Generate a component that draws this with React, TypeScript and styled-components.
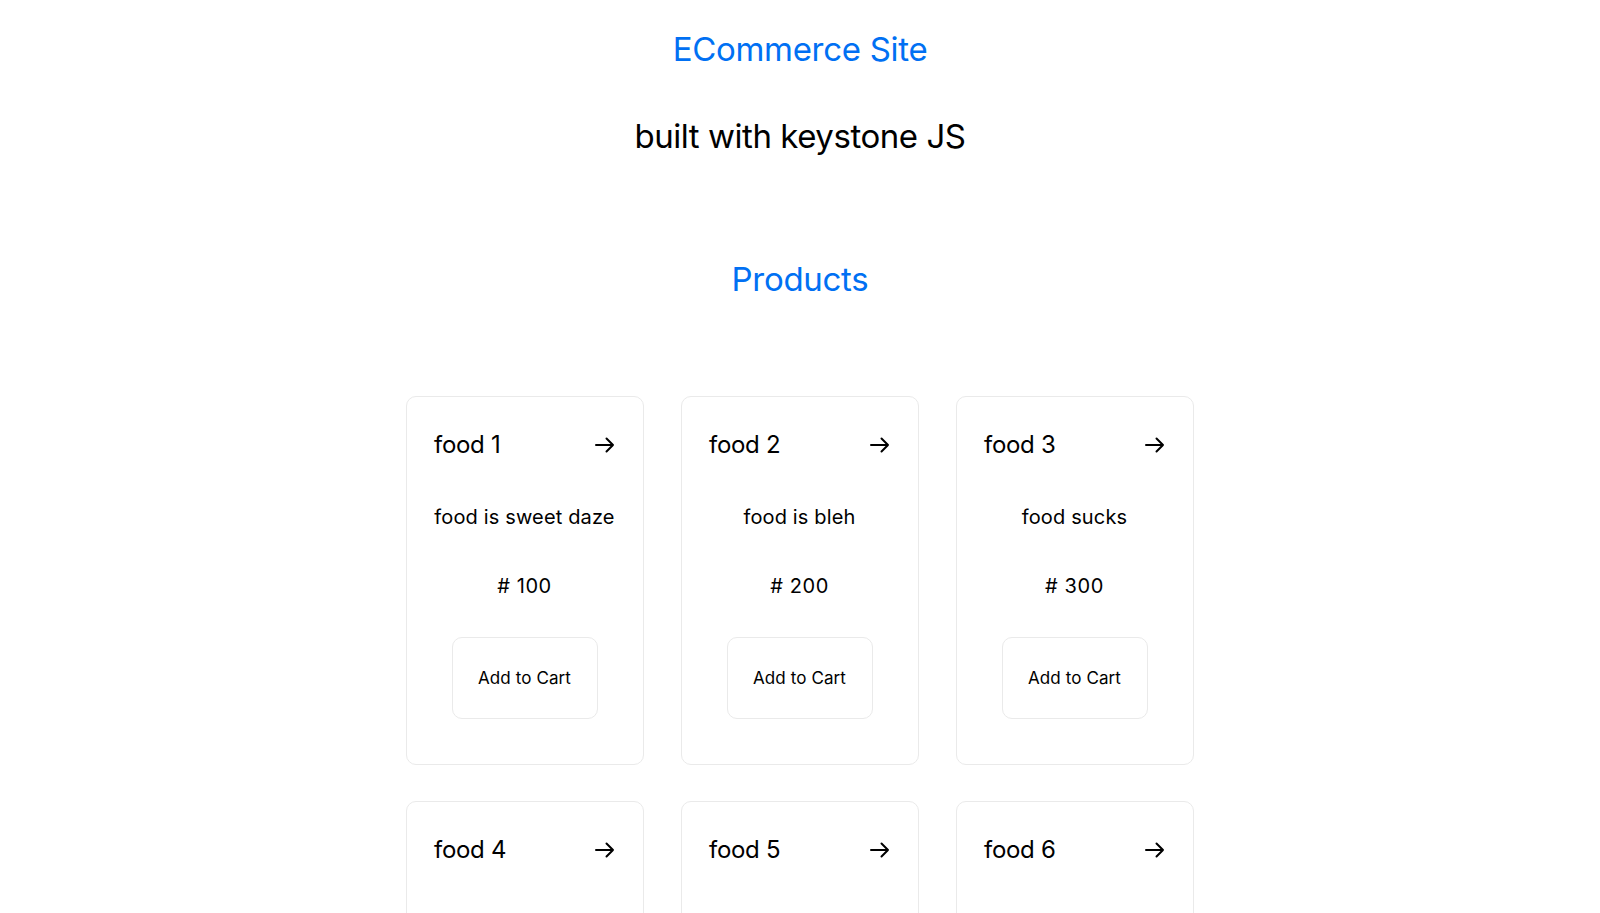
import React, { FC } from "react";
import styled, { createGlobalStyle } from "styled-components";

const GlobalStyle = createGlobalStyle`
  html, body {
    margin: 0;
    padding: 0;
    background: #fff;
    font-family: Inter, "Noto Sans", "Liberation Sans", sans-serif;
    color: #000;
  }
  * {
    box-sizing: border-box;
  }
`;

const Main = styled.main`
  display: flex;
  flex-direction: column;
  align-items: center;
  padding-top: 29px;
`;

const Title = styled.h1<{ $blue?: boolean }>`
  margin: 0;
  font-size: 33px;
  line-height: 40px;
  font-weight: 400;
  letter-spacing: -0.3px;
  color: ${(p) => (p.$blue ? "#0070f3" : "#000")};
`;

const Subtitle = styled(Title)`
  margin-top: 47px;
  letter-spacing: -0.45px;
`;

const SectionTitle = styled(Title)`
  margin-top: 103px;
`;

const Grid = styled.div`
  margin-top: 97px;
  display: grid;
  grid-template-columns: repeat(3, 238px);
  column-gap: 37px;
  row-gap: 36px;
`;

const Card = styled.div`
  border: 1px solid #eaeaea;
  border-radius: 10px;
  padding: 32px 28px 45px 27px;
  display: flex;
  flex-direction: column;
  align-items: center;
`;

const CardHeader = styled.div`
  align-self: stretch;
  display: flex;
  justify-content: space-between;
  align-items: center;
  height: 32px;
`;

const Name = styled.h2`
  margin: 0;
  font-size: 24px;
  line-height: 32px;
  font-weight: 400;
  letter-spacing: -0.3px;
`;

const Text = styled.p<{ $gap: number }>`
  margin: ${(p) => p.$gap}px 0 0;
  font-size: 20px;
  line-height: 28px;
  letter-spacing: 0.15px;
  text-align: center;
`;

const Price = styled(Text)`
  letter-spacing: 0.6px;
`;

const CartButton = styled.button`
  margin-top: 37px;
  width: 146px;
  height: 82px;
  background: #fff;
  border: 1px solid #eaeaea;
  border-radius: 10px;
  font-family: inherit;
  font-size: 17px;
  color: #000;
  letter-spacing: 0.1px;
  cursor: pointer;
`;

const Arrow: FC = () => (
  <svg width="20" height="16" viewBox="0 0 20 16" fill="none" stroke="#000" strokeWidth="2" strokeLinecap="round" strokeLinejoin="round">
    <path d="M1 8h17M11.5 1.5L18 8l-6.5 6.5" />
  </svg>
);

const products = [
  { name: "food 1", description: "food is sweet daze", price: 100 },
  { name: "food 2", description: "food is bleh", price: 200 },
  { name: "food 3", description: "food sucks", price: 300 },
  { name: "food 4", description: "food is okay", price: 400 },
  { name: "food 5", description: "food is good enough", price: 500 },
  { name: "food 6", description: "food is nice", price: 600 },
];

const App: FC = () => (
  <>
    <GlobalStyle />
    <Main>
      <Title $blue>ECommerce Site</Title>
      <Subtitle>built with keystone JS</Subtitle>
      <SectionTitle $blue>Products</SectionTitle>
      <Grid>
        {products.map((product) => (
          <Card key={product.name}>
            <CardHeader>
              <Name>{product.name}</Name>
              <Arrow />
            </CardHeader>
            <Text $gap={42}>{product.description}</Text>
            <Price $gap={41}># {product.price}</Price>
            <CartButton>Add to Cart</CartButton>
          </Card>
        ))}
      </Grid>
    </Main>
  </>
);

export default App;
